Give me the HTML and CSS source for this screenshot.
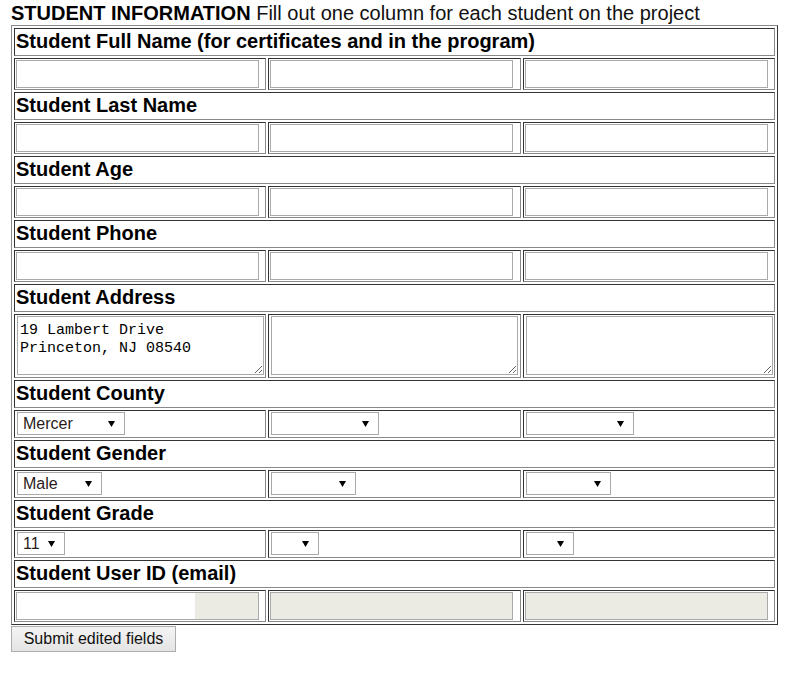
FILE: index.html
```html
<!DOCTYPE html>
<html>
<head>
<meta charset="utf-8">
<link rel="stylesheet" href="styles.css">
</head>
<body>
<div class="page">
  <div class="title"><b>STUDENT INFORMATION</b> Fill out one column for each student on the project</div>
  <form class="student-form">
    <table class="students">
      <tr><th colspan="3">Student Full Name (for certificates and in the program)</th></tr>
      <tr><td><input class="field" type="text"></td><td><input class="field" type="text"></td><td><input class="field" type="text"></td></tr>
      <tr><th colspan="3">Student Last Name</th></tr>
      <tr><td><input class="field" type="text"></td><td><input class="field" type="text"></td><td><input class="field" type="text"></td></tr>
      <tr><th colspan="3">Student Age</th></tr>
      <tr><td><input class="field" type="text"></td><td><input class="field" type="text"></td><td><input class="field" type="text"></td></tr>
      <tr><th colspan="3">Student Phone</th></tr>
      <tr><td><input class="field" type="text"></td><td><input class="field" type="text"></td><td><input class="field" type="text"></td></tr>
      <tr><th colspan="3">Student Address</th></tr>
      <tr><td><textarea class="address">19 Lambert Drive
Princeton, NJ 08540</textarea></td><td><textarea class="address"></textarea></td><td><textarea class="address"></textarea></td></tr>
      <tr><th colspan="3">Student County</th></tr>
      <tr><td><select class="pick county"><option>Mercer</option></select></td><td><select class="pick county"><option></option></select></td><td><select class="pick county"><option></option></select></td></tr>
      <tr><th colspan="3">Student Gender</th></tr>
      <tr><td><select class="pick gender"><option>Male</option></select></td><td><select class="pick gender"><option></option></select></td><td><select class="pick gender"><option></option></select></td></tr>
      <tr><th colspan="3">Student Grade</th></tr>
      <tr><td><select class="pick grade"><option>11</option></select></td><td><select class="pick grade"><option></option></select></td><td><select class="pick grade"><option></option></select></td></tr>
      <tr><th colspan="3">Student User ID (email)</th></tr>
      <tr><td><input class="field locked partial" type="text" readonly></td><td><input class="field locked" type="text" disabled></td><td><input class="field locked" type="text" disabled></td></tr>
    </table>
    <button class="submit" type="button">Submit edited fields</button>
  </form>
</div>
</body>
</html>
```

FILE: styles.css
```css
html, body {
  margin: 0;
  padding: 0;
  background: #fff;
}

.page {
  padding: 2px 0 0 11px;
  font-family: "Liberation Sans", Arial, sans-serif;
  color: #111;
}

.title {
  font-size: 20px;
  line-height: 23px;
  white-space: nowrap;
}

.title b {
  color: #000;
}

.student-form {
  margin: 0;
}

.students {
  width: 767px;
  table-layout: fixed;
  border-collapse: separate;
  border-spacing: 2px;
  border: 1px solid;
  border-color: #8a8a8a #333 #333 #8a8a8a;
}

.students th,
.students td {
  border: 1px solid;
  border-color: #333 #8a8a8a #8a8a8a #333;
  padding: 1px;
  vertical-align: top;
}

.students th {
  padding: 0 1px 2px 1px;
  font: bold 20px/24px "Liberation Sans", Arial, sans-serif;
  color: #000;
  text-align: left;
}

.field {
  display: block;
  box-sizing: border-box;
  width: 243px;
  height: 28px;
  margin: 0;
  border: 1px solid #a9a9a9;
  background: #fff;
  padding: 0 2px;
  font: 16px "Liberation Sans", Arial, sans-serif;
}

.field.locked {
  background: #ebebe4;
}

.field.partial {
  background: linear-gradient(to right, #fff 0, #fff 178px, #ebebe4 178px);
}

.address {
  display: block;
  box-sizing: border-box;
  width: 247px;
  height: 59px;
  margin: 0 0 1px 1px;
  border: 1px solid #a9a9a9;
  padding: 5px 2px 2px 2px;
  font: 15px/18px "Liberation Mono", "Courier New", monospace;
  color: #000;
  resize: both;
}

.pick {
  display: block;
  box-sizing: border-box;
  height: 23px;
  margin: 0 0 1px 1px;
  padding: 0 20px 0 5px;
  border: 1px solid #a9a9a9;
  border-radius: 0;
  -webkit-appearance: none;
  appearance: none;
  font: 16px/21px "Liberation Sans", Arial, sans-serif;
  color: #2a1a1a;
  background: #fff url("data:image/svg+xml;utf8,<svg xmlns='http://www.w3.org/2000/svg' width='7' height='6' viewBox='0 0 7 6'><polygon points='0,0 7,0 3.5,6' fill='black'/></svg>") no-repeat right 9px center;
}

.county { width: 108px; }
.gender { width: 85px; }
.grade { width: 48px; }

.submit {
  display: block;
  box-sizing: border-box;
  margin: 1px 0 0 0;
  width: 165px;
  height: 26px;
  padding: 0 0 0 0;
  border: 1px solid #adadad;
  border-radius: 0;
  background: linear-gradient(#f4f4f4, #e4e4e4);
  font: 16px "Liberation Sans", Arial, sans-serif;
  color: #111;
}
```
